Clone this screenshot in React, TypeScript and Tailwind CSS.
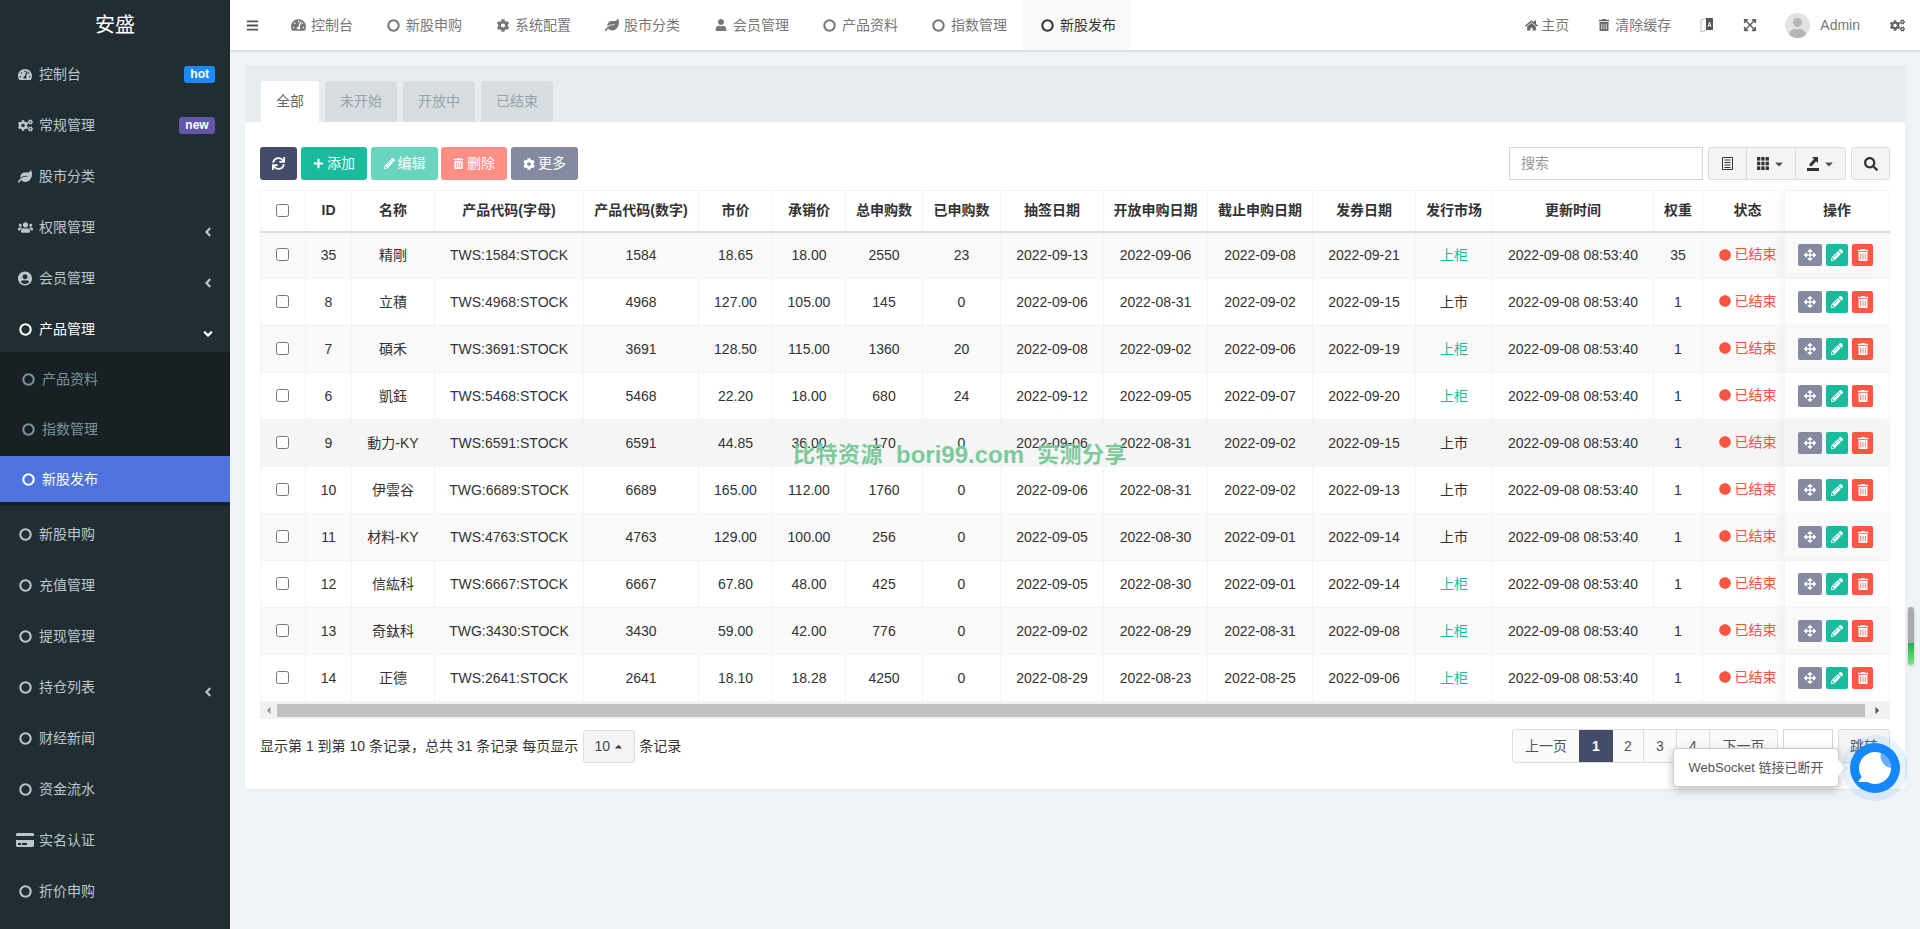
import {
  FaAngleDown,
  FaAngleLeft,
  FaArrowsAlt,
  FaBars,
  FaCaretDown,
  FaCaretUp,
  FaCaretLeft,
  FaCaretRight,
  FaCircle,
  FaCog,
  FaCogs,
  FaCreditCard,
  FaExpandArrowsAlt,
  FaHome,
  FaLeaf,
  FaPencilAlt,
  FaPlus,
  FaSearch,
  FaSync,
  FaTachometerAlt,
  FaTrashAlt,
  FaUser,
  FaUserCircle,
  FaUsers,
} from 'react-icons/fa'

const widths = [45, 46, 83, 149, 115, 74, 73, 77, 78, 103, 104, 105, 103, 77, 161, 49, 82, 105]

const headers = ['ID', '名称', '产品代码(字母)', '产品代码(数字)', '市价', '承销价', '总申购数', '已申购数', '抽签日期', '开放申购日期', '截止申购日期', '发券日期', '发行市场', '更新时间', '权重', '状态', '操作']

const updated = '2022-09-08 08:53:40'

const rows = [
  ['35', '精剛', 'TWS:1584:STOCK', '1584', '18.65', '18.00', '2550', '23', '2022-09-13', '2022-09-06', '2022-09-08', '2022-09-21', '上柜', updated, '35'],
  ['8', '立積', 'TWS:4968:STOCK', '4968', '127.00', '105.00', '145', '0', '2022-09-06', '2022-08-31', '2022-09-02', '2022-09-15', '上市', updated, '1'],
  ['7', '碩禾', 'TWS:3691:STOCK', '3691', '128.50', '115.00', '1360', '20', '2022-09-08', '2022-09-02', '2022-09-06', '2022-09-19', '上柜', updated, '1'],
  ['6', '凱鈺', 'TWS:5468:STOCK', '5468', '22.20', '18.00', '680', '24', '2022-09-12', '2022-09-05', '2022-09-07', '2022-09-20', '上柜', updated, '1'],
  ['9', '動力-KY', 'TWS:6591:STOCK', '6591', '44.85', '36.00', '170', '0', '2022-09-06', '2022-08-31', '2022-09-02', '2022-09-15', '上市', updated, '1'],
  ['10', '伊雲谷', 'TWG:6689:STOCK', '6689', '165.00', '112.00', '1760', '0', '2022-09-06', '2022-08-31', '2022-09-02', '2022-09-13', '上市', updated, '1'],
  ['11', '材料-KY', 'TWS:4763:STOCK', '4763', '129.00', '100.00', '256', '0', '2022-09-05', '2022-08-30', '2022-09-01', '2022-09-14', '上市', updated, '1'],
  ['12', '信紘科', 'TWS:6667:STOCK', '6667', '67.80', '48.00', '425', '0', '2022-09-05', '2022-08-30', '2022-09-01', '2022-09-14', '上柜', updated, '1'],
  ['13', '奇鈦科', 'TWG:3430:STOCK', '3430', '59.00', '42.00', '776', '0', '2022-09-02', '2022-08-29', '2022-08-31', '2022-09-08', '上柜', updated, '1'],
  ['14', '正德', 'TWS:2641:STOCK', '2641', '18.10', '18.28', '4250', '0', '2022-08-29', '2022-08-23', '2022-08-25', '2022-09-06', '上柜', updated, '1'],
]

// fa-circle-o, thicker than the FA5 regular circle
const Ring = ({ size = 13 }: { size?: number }) => (
  <svg viewBox="0 0 14 14" width={size} height={size} className="shrink-0">
    <circle cx="7" cy="7" r="5.6" fill="none" stroke="currentColor" strokeWidth="2.2" />
  </svg>
)

const topNav = [
  { label: '控制台', icon: <FaTachometerAlt className="w-[15px] text-[14px]" /> },
  { label: '新股申购', icon: <span className="w-[14px]"><Ring /></span> },
  { label: '系统配置', icon: <FaCog className="w-[14px] text-[13px]" /> },
  { label: '股市分类', icon: <FaLeaf className="w-[14px] text-[14px]" /> },
  { label: '会员管理', icon: <FaUser className="w-[14px] text-[12px]" /> },
  { label: '产品资料', icon: <span className="w-[14px]"><Ring /></span> },
  { label: '指数管理', icon: <span className="w-[14px]"><Ring /></span> },
  { label: '新股发布', icon: <span className="w-[14px]"><Ring /></span>, active: true },
]

const SideItem = ({ icon, label, badge, arrow }: { icon: any; label: string; badge?: any; arrow?: boolean }) => (
  <div className="h-[48px] mb-[3px] flex items-center pl-[18px] pr-[15px] text-[#b8c7ce]">
    <span className="w-[14px] flex justify-center text-[15px]">{icon}</span>
    <span className="ml-[7px]">{label}</span>
    <span className="ml-auto">{badge}</span>
    {arrow && <FaAngleLeft className="ml-auto mt-[9px] text-[14px]" />}
  </div>
)

const SubItem = ({ label, active }: { label: string; active?: boolean }) => (
  <div className={`h-[46px] flex items-center pl-[22px] ${active ? 'bg-[#4e73df] text-white' : 'text-[#7b939c]'}`}>
    <Ring />
    <span className="ml-[7px]">{label}</span>
  </div>
)

const Sidebar = () => (
  <aside className="w-[230px] shrink-0 bg-[#222d32] overflow-hidden">
    <div className="h-[50px] flex items-center justify-center text-white text-[20px]">安盛</div>
    <SideItem icon={<FaTachometerAlt />} label="控制台" badge={<span className="block bg-[#1b8bf9] text-white text-[12px] font-bold leading-[17px] px-[6px] rounded-[3px]">hot</span>} />
    <SideItem icon={<FaCogs className="shrink-0" />} label="常规管理" badge={<span className="block w-[36px] text-center bg-[#6156a8] text-white text-[12px] font-bold leading-[17px] rounded-[3px]">new</span>} />
    <SideItem icon={<FaLeaf />} label="股市分类" />
    <SideItem icon={<FaUsers className="shrink-0" />} label="权限管理" arrow />
    <SideItem icon={<FaUserCircle />} label="会员管理" arrow />
    <div className="h-[47px] pt-[2px] flex items-center pl-[19px] pr-[15px] text-white">
      <Ring />
      <span className="ml-[7px]">产品管理</span>
      <FaAngleDown className="ml-auto mt-[8px] text-[14px]" />
    </div>
    <div className="bg-[#182024] py-[4px] flex flex-col gap-[4px]">
      <SubItem label="产品资料" />
      <SubItem label="指数管理" />
      <SubItem label="新股发布" active />
    </div>
    <div className="h-[4px]" />
    <SideItem icon={<Ring />} label="新股申购" />
    <SideItem icon={<Ring />} label="充值管理" />
    <SideItem icon={<Ring />} label="提现管理" />
    <SideItem icon={<Ring />} label="持仓列表" arrow />
    <SideItem icon={<Ring />} label="财经新闻" />
    <SideItem icon={<Ring />} label="资金流水" />
    <SideItem icon={<FaCreditCard className="text-[18px] shrink-0" />} label="实名认证" />
    <SideItem icon={<Ring />} label="折价申购" />
  </aside>
)

const Header = () => (
  <header className="h-[50px] shrink-0 bg-white shadow-[0_1px_3px_rgba(0,0,0,0.15)] flex items-center text-[#777] relative z-10">
    <div className="w-[44px] flex justify-center text-[#555] text-[13px]">
      <FaBars />
    </div>
    {topNav.map((item) => (
      <div key={item.label} className={`h-[50px] flex items-center gap-[5px] ${item.active ? 'bg-[#f9f9f9] text-[#333] -ml-[2px] pl-[19px] pr-[15px]' : 'px-[17px]'}`}>
        {item.icon}
        <span>{item.label}</span>
      </div>
    ))}
    <div className="ml-auto flex items-center pr-[15px]">
      <FaHome className="text-[13px] text-[#666]" />
      <span className="ml-[3px]">主页</span>
      <FaTrashAlt className="ml-[29px] text-[12px] text-[#666]" />
      <span className="ml-[5px]">清除缓存</span>
      <svg viewBox="0 0 14 16" className="ml-[29px] w-[14px] h-[16px]">
        <path d="M1 3 L7 1 V13 L1 15 Z" fill="none" stroke="#bbb" strokeWidth="1" />
        <path d="M6 1 H12 Q13 1 13 2 V13 H6 Z" fill="#555" />
        <path d="M8 10 L9.5 5 L11 10 M8.6 8.5 H10.4" fill="none" stroke="#fff" strokeWidth="0.9" />
      </svg>
      <FaExpandArrowsAlt className="ml-[29px] text-[14px] text-[#666]" />
      <div className="ml-[28px] w-[25px] h-[25px] rounded-full bg-[#e3e3e3] overflow-hidden relative">
        <span className="absolute left-[8px] top-[5px] w-[9px] h-[9px] rounded-full bg-[#b5b5b5]" />
        <span className="absolute left-[4px] top-[16px] w-[17px] h-[12px] rounded-full bg-[#b5b5b5]" />
      </div>
      <span className="ml-[10px]">Admin</span>
      <FaCogs className="ml-[30px] text-[15px] text-[#666]" />
    </div>
  </header>
)

const Toolbar = () => (
  <div className="flex h-[33px] text-white">
    <button className="w-[37px] rounded-[3px] bg-[#444c69] flex items-center justify-center text-[13px]">
      <FaSync />
    </button>
    <button className="ml-[4px] w-[66px] rounded-[3px] bg-[#18bc9c] flex items-center justify-center gap-[3px]">
      <FaPlus className="text-[11px]" />
      添加
    </button>
    <button className="ml-[4px] w-[67px] rounded-[3px] bg-[#6ad5bf] flex items-center justify-center gap-[3px]">
      <FaPencilAlt className="text-[11px]" />
      编辑
    </button>
    <button className="ml-[3px] w-[66px] rounded-[3px] bg-[#ff8f85] flex items-center justify-center gap-[3px]">
      <FaTrashAlt className="text-[11px]" />
      删除
    </button>
    <button className="ml-[4px] w-[67px] rounded-[3px] bg-[#858aa0] flex items-center justify-center gap-[3px]">
      <FaCog className="text-[12px]" />
      更多
    </button>
    <div className="ml-auto w-[194px] border border-[#d2d6de] flex items-center pl-[11px] text-[#999]">搜索</div>
    <div className="ml-[5px] w-[138px] flex rounded-[3px] border border-[#ddd] bg-[#f4f4f4] text-[#444]">
      <div className="w-[38px] flex items-center justify-center border-r border-[#ddd]">
        <svg viewBox="0 0 11 13" className="w-[11px] h-[13px]">
          <path d="M0.5 0.5 H10.5 V12.5 H0.5 Z" fill="none" stroke="#333" />
          <path d="M2.5 3 H8.5 M2.5 5.5 H8.5 M2.5 8 H8.5 M2.5 10.5 H8.5" stroke="#333" strokeWidth="1.2" />
        </svg>
      </div>
      <div className="w-[49px] flex items-center justify-center gap-[4px] border-r border-[#ddd]">
        <svg viewBox="0 0 12 13" className="w-[12px] h-[13px]" fill="#333">
          <rect x="0" y="0" width="3.3" height="3.6" />
          <rect x="4.3" y="0" width="3.3" height="3.6" />
          <rect x="8.6" y="0" width="3.3" height="3.6" />
          <rect x="0" y="4.7" width="3.3" height="3.6" />
          <rect x="4.3" y="4.7" width="3.3" height="3.6" />
          <rect x="8.6" y="4.7" width="3.3" height="3.6" />
          <rect x="0" y="9.4" width="3.3" height="3.6" />
          <rect x="4.3" y="9.4" width="3.3" height="3.6" />
          <rect x="8.6" y="9.4" width="3.3" height="3.6" />
        </svg>
        <FaCaretDown className="text-[12px] text-[#555]" />
      </div>
      <div className="flex-1 flex items-center justify-center gap-[4px]">
        <svg viewBox="0 0 12 14" className="w-[12px] h-[14px]">
          <path d="M0 11 H12 V14 H0 Z" fill="#333" />
          <path d="M5 0 H11 V6 L9 4.2 L5 9 L2.5 9 L2.5 7 L7 2 Z" fill="#333" />
        </svg>
        <FaCaretDown className="text-[12px] text-[#555]" />
      </div>
    </div>
    <div className="ml-[5px] w-[39px] rounded-[3px] border border-[#ddd] bg-[#f4f4f4] flex items-center justify-center text-[14px] text-[#333]">
      <FaSearch />
    </div>
  </div>
)

const ActionButtons = () => (
  <div className="flex justify-center gap-[4px] text-white text-[12px] pr-[3px]">
    <span className="w-[24px] h-[22px] rounded-[2px] bg-[#858aa0] flex items-center justify-center">
      <FaArrowsAlt />
    </span>
    <span className="w-[22px] h-[22px] rounded-[2px] bg-[#18bc9c] flex items-center justify-center">
      <FaPencilAlt />
    </span>
    <span className="w-[21px] h-[22px] rounded-[2px] bg-[#fb5745] flex items-center justify-center">
      <FaTrashAlt />
    </span>
  </div>
)

const DataTable = () => (
  <table className="mt-[10px] w-[1629px] table-fixed border-collapse text-center text-[#333]">
    <colgroup>
      {widths.map((w, i) => (
        <col key={i} style={{ width: w }} />
      ))}
    </colgroup>
    <thead>
      <tr className="h-[41px]">
        <th className="border border-b-2 border-[#f4f4f4] border-b-[#ddd] font-normal">
          <input type="checkbox" readOnly className="block mx-auto -translate-x-[1px]" />
        </th>
        {headers.map((h, i) => (
          <th key={h} className={`border border-b-2 border-[#f4f4f4] border-b-[#ddd] font-bold whitespace-nowrap ${i === 15 ? 'pl-[8px]' : ''} ${i === 16 ? 'shadow-[-6px_0_8px_rgba(0,0,0,0.04)]' : ''}`}>
            {h}
          </th>
        ))}
      </tr>
    </thead>
    <tbody>
      {rows.map((row, r) => (
        <tr key={row[0]} className={`h-[47px] ${r === 4 ? 'bg-[#f5f5f5]' : r % 2 === 0 ? 'bg-[#f9f9f9]' : 'bg-white'}`}>
          <td className="border border-[#f4f4f4]">
            <input type="checkbox" readOnly className="block mx-auto -translate-x-[1px] -translate-y-[1px]" />
          </td>
          {row.map((cell, c) => (
            <td key={c} className={`border border-[#f4f4f4] whitespace-nowrap ${cell === '上柜' ? 'text-[#18bc9c]' : ''}`}>
              {cell}
            </td>
          ))}
          <td className="border border-[#f4f4f4] pl-[8px] whitespace-nowrap text-[#f75444]">
            <span className="inline-flex items-center gap-[4px]">
              <FaCircle className="text-[12px]" />
              已结束
            </span>
          </td>
          <td className="border border-[#f4f4f4] shadow-[-6px_0_8px_rgba(0,0,0,0.04)]">
            <ActionButtons />
          </td>
        </tr>
      ))}
    </tbody>
  </table>
)

const Pager = () => (
  <div className="ml-auto flex h-[34px] text-[#555]">
    <div className="flex rounded-[3px] border border-[#ddd] bg-[#fafafa]">
      <span className="w-[66px] flex items-center justify-center">上一页</span>
      <span className="w-[34px] flex items-center justify-center bg-[#444c69] text-white font-bold">1</span>
      <span className="w-[31px] flex items-center justify-center border-r border-[#ddd]">2</span>
      <span className="w-[33px] flex items-center justify-center border-r border-[#ddd]">3</span>
      <span className="w-[33px] flex items-center justify-center border-r border-[#ddd]">4</span>
      <span className="w-[67px] flex items-center justify-center">下一页</span>
    </div>
    <div className="ml-[5px] w-[50px] border border-[#d2d6de] bg-white" />
    <div className="ml-[5px] w-[52px] rounded-[3px] border border-[#ddd] bg-[#f4f4f4] flex items-center justify-center">跳转</div>
  </div>
)

const Floating = () => (
  <>
    <div className="absolute left-[793px] top-[441px] flex items-center gap-[13px] text-[#7cca9b] text-[22px] font-bold leading-[28px] whitespace-nowrap">
      <span className="tracking-[0.5px]">比特资源</span>
      <span className="text-[24px]">bori99.com</span>
      <span className="tracking-[0.5px]">实测分享</span>
    </div>
    <div className="absolute left-[1908px] top-[607px] w-[6px] h-[58px] rounded-[3px] bg-[linear-gradient(#aaa_0_62%,#22b04a_62%,#7be57f)] shadow-[0_1px_3px_rgba(0,0,0,0.2)]" />
    <div className="absolute left-[1673px] top-[748px] w-[166px] h-[39px] rounded-[4px] bg-white border border-[#ccc] shadow-[0_3px_10px_rgba(0,0,0,0.25)] flex items-center justify-center text-[13px] text-[#555] whitespace-nowrap">
      WebSocket 链接已断开
      <span className="absolute -right-[7px] top-[13px] w-[12px] h-[12px] rotate-45 bg-white border-t border-r border-[#ddd]" />
    </div>
    <svg viewBox="0 0 66 66" className="absolute left-[1842px] top-[735px] w-[66px] h-[66px]">
      <circle cx="33" cy="33" r="33" fill="#1487fb" fillOpacity="0.1" />
      <circle cx="33" cy="33" r="25" fill="#1487fb" />
      <circle cx="33" cy="33" r="16" fill="#fff" />
      <path d="M21 40 L16 47 L27 47 Z" fill="#fff" />
      <path d="M39 18 A16 16 0 0 1 49 33 A12 12 0 0 1 39 18 Z" fill="#69aefb" />
    </svg>
  </>
)

export default function App() {
  return (
    <div className="relative w-[1920px] h-[929px] overflow-hidden flex text-[14px] bg-[#eff3f6] font-['Liberation_Sans','Noto_Sans_CJK_SC',sans-serif]">
      <Sidebar />
      <main className="flex-1 flex flex-col min-w-0">
        <Header />
        <div className="p-[15px]">
          <div className="rounded-[3px] bg-white shadow-[0_1px_1px_rgba(0,0,0,0.05)]">
            <div className="h-[57px] bg-[#e8ecef] flex items-end pl-[16px] gap-[6px]">
              <div className="w-[58px] h-[41px] rounded-t-[3px] bg-white text-[#666] flex items-center justify-center">全部</div>
              {['未开始', '开放中', '已结束'].map((t) => (
                <div key={t} className="w-[72px] h-[41px] rounded-t-[3px] bg-[#d7dde1] text-[#98a4ab] flex items-center justify-center">
                  {t}
                </div>
              ))}
            </div>
            <div className="px-[15px] pt-[25px] pb-[26px]">
              <Toolbar />
              <DataTable />
              <div className="h-[17px] bg-[#f1f1f1] flex items-center text-[#555] w-[1630px]">
                <span className="w-[17px] flex justify-center text-[11px] text-[#999]">
                  <FaCaretLeft />
                </span>
                <span className="flex-1 h-[13px] bg-[#c1c1c1]" />
                <span className="w-[25px] flex justify-center text-[11px]">
                  <FaCaretRight />
                </span>
              </div>
              <div className="mt-[10px] flex items-center text-[#333]">
                <span>显示第 1 到第 10 条记录，总共 31 条记录 每页显示</span>
                <span className="ml-[5px] w-[52px] h-[33px] rounded-[3px] border border-[#ddd] bg-[#f4f4f4] flex items-center justify-center gap-[3px] text-[#444]">
                  10
                  <FaCaretUp className="text-[11px]" />
                </span>
                <span className="ml-[4px]">条记录</span>
                <Pager />
              </div>
            </div>
          </div>
        </div>
      </main>
      <Floating />
    </div>
  )
}
